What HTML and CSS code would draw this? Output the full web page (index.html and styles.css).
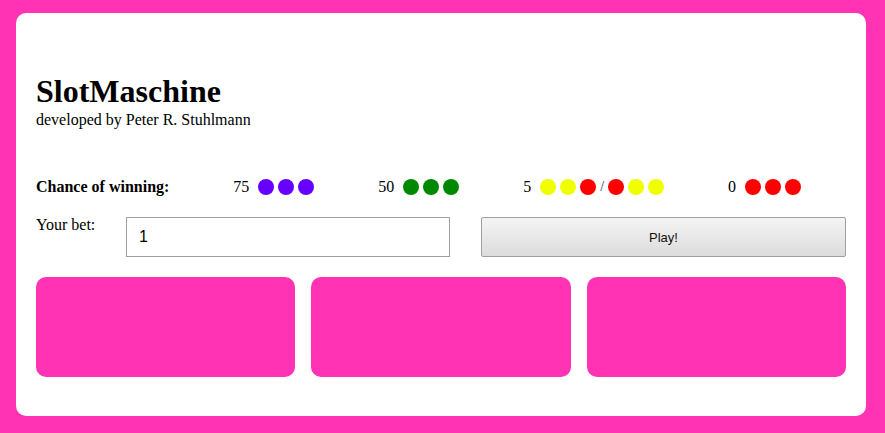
FILE: index.html
```html
<!DOCTYPE html>
<html lang="de">
<head>
<meta charset="utf-8">
<title>SlotMaschine</title>
<link rel="stylesheet" href="styles.css">
</head>
<body>
<main class="card">
  <header class="header">
    <h1 class="title">SlotMaschine</h1>
    <div class="subtitle">developed by Peter R. Stuhlmann</div>
  </header>
  <section class="chances">
    <strong class="chances-label">Chance of winning:</strong>
    <div class="chance"><span class="num">75</span><span class="dots"><i class="dot purple"></i><i class="dot purple"></i><i class="dot purple"></i></span></div>
    <div class="chance"><span class="num">50</span><span class="dots"><i class="dot green"></i><i class="dot green"></i><i class="dot green"></i></span></div>
    <div class="chance"><span class="num">5</span><span class="dots"><i class="dot yellow"></i><i class="dot yellow"></i><i class="dot red"></i></span><span class="slash">/</span><span class="dots"><i class="dot red"></i><i class="dot yellow"></i><i class="dot yellow"></i></span></div>
    <div class="chance"><span class="num">0</span><span class="dots"><i class="dot red"></i><i class="dot red"></i><i class="dot red"></i></span></div>
  </section>
  <section class="bet">
    <label class="bet-label" for="bet">Your bet:</label>
    <input class="bet-input" id="bet" type="text" value="1">
    <button class="play" type="button">Play!</button>
  </section>
  <section class="slots">
    <div class="slot"></div>
    <div class="slot"></div>
    <div class="slot"></div>
  </section>
</main>
</body>
</html>
```
FILE: styles.css
```css
html, body {
  margin: 0;
  padding: 0;
}
body {
  background: #ff33b3;
  font-family: "Liberation Serif", "Times New Roman", serif;
  font-size: 16px;
  color: #000;
  padding: 13px 19px 17px 16px;
}
.card {
  background: #fff;
  border-radius: 10px;
  padding: 60px 20px 39px 20px;
  height: 403px;
  box-sizing: border-box;
}
.title {
  margin: 0;
  font-size: 32px;
  font-weight: bold;
  line-height: 37px;
}
.subtitle {
  line-height: 18px;
  margin-top: 1px;
}
.chances {
  display: flex;
  align-items: center;
  justify-content: space-between;
  padding-right: 45px;
  margin-top: 49px;
  height: 18px;
}
.chances-label {
  font-weight: bold;
}
.chance {
  display: flex;
  align-items: center;
}
.num {
  margin-right: 9px;
}
.dots {
  display: flex;
  gap: 4px;
}
.dot {
  display: block;
  width: 16px;
  height: 16px;
  border-radius: 50%;
}
.purple { background: #6600ff; }
.green { background: #008800; }
.yellow { background: #f0ff00; }
.red { background: #ff0000; }
.slash {
  margin: 0 4px;
  font-size: 14px;
  color: #333;
}
.bet {
  display: flex;
  align-items: flex-start;
  margin-top: 21px;
}
.bet-label {
  width: 90px;
  line-height: 18px;
  margin-top: -1px;
}
.bet-input {
  box-sizing: border-box;
  width: 324px;
  height: 40px;
  margin: 0;
  border: 1px solid #a0a0a0;
  padding: 0 12px;
  font-family: "Liberation Sans", Arial, sans-serif;
  font-size: 16px;
  color: #000;
  outline: none;
}
.play {
  box-sizing: border-box;
  flex: 1;
  height: 40px;
  margin: 0 0 0 31px;
  border: 1px solid #a0a0a0;
  border-radius: 2px;
  background: linear-gradient(#f4f4f4, #dcdcdc);
  font-family: "Liberation Sans", Arial, sans-serif;
  font-size: 13px;
  color: #111;
}
.slots {
  display: grid;
  grid-template-columns: 1fr 1fr 1fr;
  gap: 16px;
  margin-top: 20px;
}
.slot {
  height: 100px;
  border-radius: 10px;
  background: #ff33b3;
}
```
